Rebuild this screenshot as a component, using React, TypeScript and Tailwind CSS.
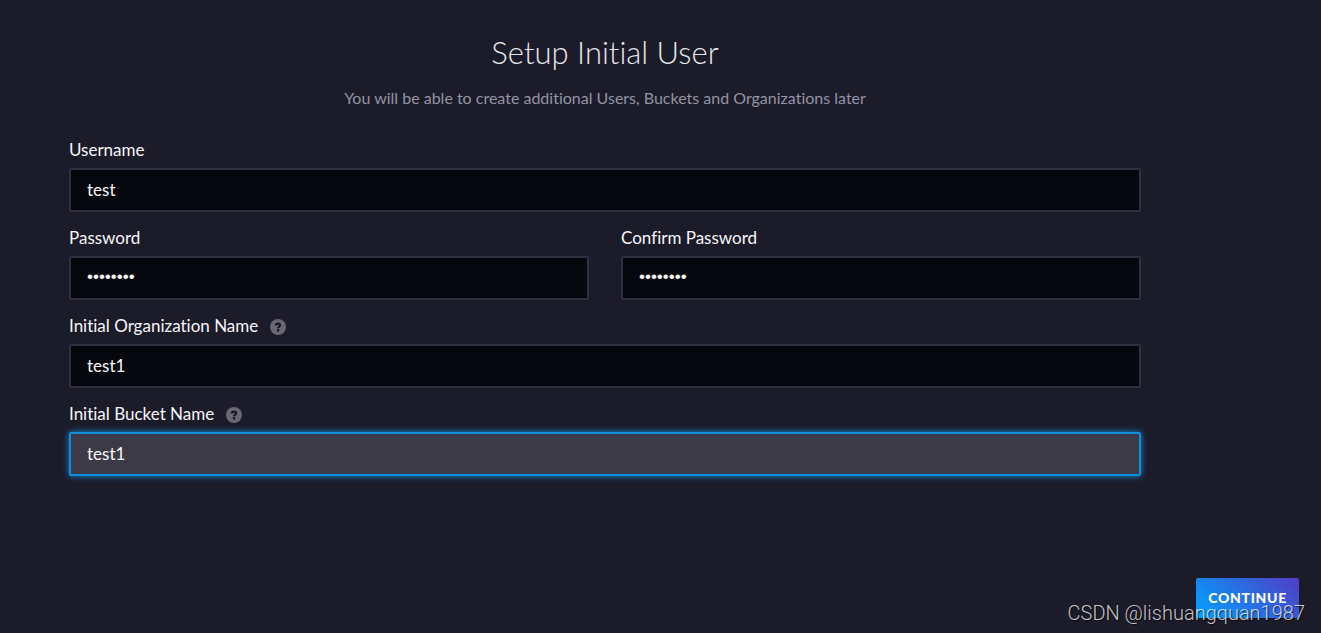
import type { InputHTMLAttributes } from 'react'

type FieldProps = InputHTMLAttributes<HTMLInputElement> & {
  id: string
  label: string
  help?: string
  active?: boolean
}

function HelpButton({ label }: { label: string }) {
  return (
    <button type="button" aria-label={label} className="mt-[3px] ml-3 size-4 shrink-0 rounded-full">
      <svg viewBox="0 0 16 16" className="size-4" aria-hidden="true">
        <circle cx="8" cy="8" r="8" fill="#686776" />
        <path
          d="M5.700 6.300C5.800 5 6.700 4.600 7.900 4.600c1.300 0 2.200.6 2.200 1.700C10.100 7.800 8.100 7.500 8.100 9.300"
          fill="none"
          stroke="#181722"
          strokeWidth="2.200"
        />
        <circle cx="8.100" cy="11.300" r="1.250" fill="#181722" />
      </svg>
    </button>
  )
}

function Field({ id, label, help, active = false, ...input }: FieldProps) {
  const state = active
    ? 'border-[#108edb] bg-[#3d3a48] shadow-[0_0_6px_#108edb]'
    : 'border-[#302e41] bg-[#07070e]'
  const face = input.type === 'password' ? "font-['Liberation_Sans',sans-serif]" : ''
  return (
    <div className="min-w-0 flex-1">
      <div className="flex h-7 items-start">
        <label htmlFor={id} className="text-[17px] leading-5 text-[#f6f6f8]">
          {label}
        </label>
        {help && <HelpButton label={help} />}
      </div>
      <input
        id={id}
        {...input}
        className={`block h-11 w-full rounded-xs border-2 px-4 pb-0.5 text-[17px] text-[#f6f6f8] outline-none ${state} ${face}`}
      />
    </div>
  )
}

export default function App() {
  return (
    <main className="relative flex min-h-screen flex-col bg-[#1c1b2a] pt-8 pb-[15px] font-['Lato','Open_Sans',sans-serif] [font-variant-ligatures:none]">
      <form className="flex flex-1 flex-col" onSubmit={(e) => e.preventDefault()}>
        <div className="pr-[180px] pl-[69px]">
          <h1 className="text-center text-[31px] leading-10 font-light text-[#e7e8eb]">Setup Initial User</h1>
          <p className="mt-[14px] text-center text-base leading-6 text-[#9394a3]">
            You will be able to create additional Users, Buckets and Organizations later
          </p>
          <div className="mt-[30px] flex flex-col gap-4">
            <Field id="username" label="Username" defaultValue="test" />
            <div className="flex gap-8">
              <Field id="password" label="Password" type="password" defaultValue="password" />
              <Field id="confirm" label="Confirm Password" type="password" defaultValue="password" />
            </div>
            <Field id="org" label="Initial Organization Name" help="About organizations" defaultValue="test1" />
            <Field id="bucket" label="Initial Bucket Name" help="About buckets" defaultValue="test1" active />
          </div>
        </div>
        <div className="mt-auto flex justify-end pr-[22px]">
          <button
            type="submit"
            className="h-10 rounded-xs bg-linear-45/srgb from-[#00a3ff] to-[#513cc6] px-3 text-sm font-black tracking-wider text-white"
          >
            CONTINUE
          </button>
        </div>
      </form>
      <span className="pointer-events-none absolute right-4 bottom-2 font-['Roboto',sans-serif] text-xl leading-6 font-light text-white/75 [text-shadow:1px_1px_1px_#000000aa]">
        CSDN @lishuangquan1987
      </span>
    </main>
  )
}
